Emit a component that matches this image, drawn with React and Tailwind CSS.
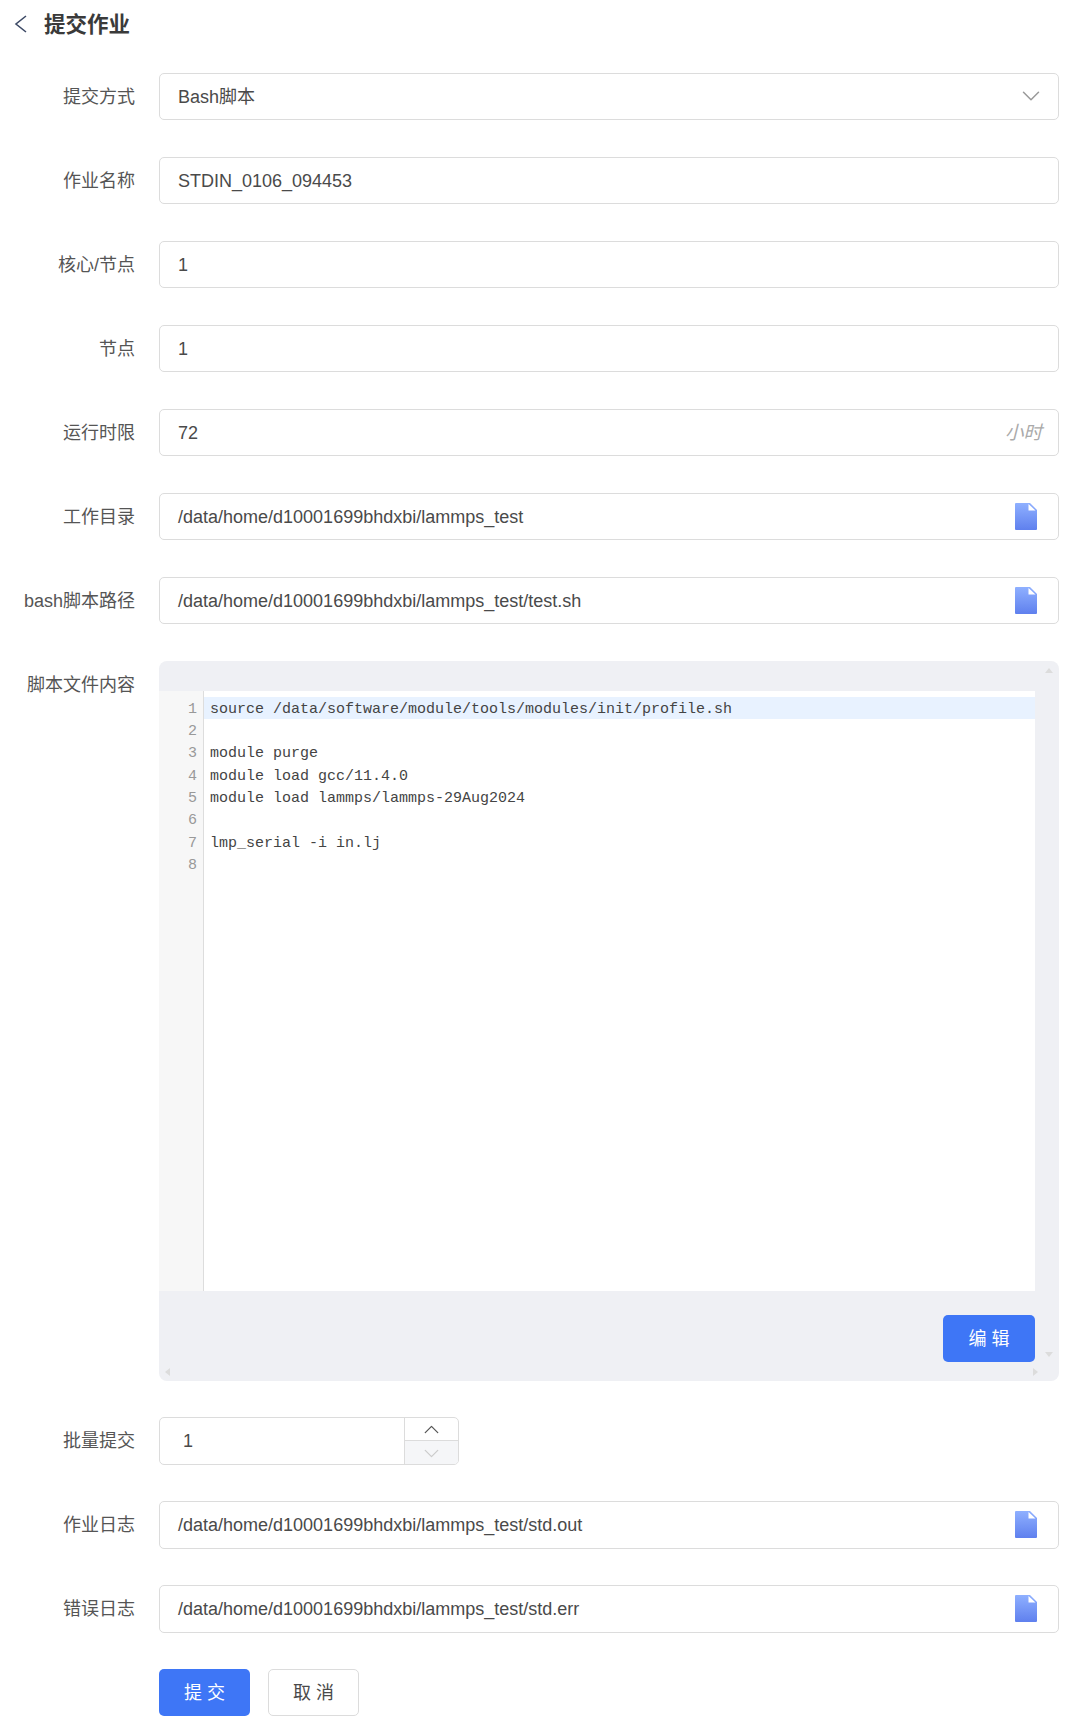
import { ChevronDown, ChevronUp } from 'lucide-react'

const cjk = "font-['Liberation_Sans','Noto_Sans_CJK_SC',sans-serif]"

function FileIcon() {
  return (
    <svg width="22" height="27" viewBox="0 0 22 27" className="shrink-0">
      <defs>
        <linearGradient id="fileGrad" x1="0" y1="0" x2="0" y2="1">
          <stop offset="0%" stopColor="#8fb0ff" />
          <stop offset="100%" stopColor="#5f80ee" />
        </linearGradient>
      </defs>
      <path d="M0 1 Q0 0 1 0 H15 L22 7 V26 Q22 27 21 27 H1 Q0 27 0 26 Z" fill="url(#fileGrad)" />
      <path d="M13.5 1 L20.5 7.5 H13.5 Z" fill="#fff" />
    </svg>
  )
}

function Row({ label, children }) {
  return (
    <div className="flex items-center">
      <div className="w-[135px] pt-[2px] text-right text-[18px] text-[#555] shrink-0">{label}</div>
      <div className="ml-[24px]">{children}</div>
    </div>
  )
}

function Field({ value, right }) {
  return (
    <div className="w-[900px] h-[47.25px] flex items-center justify-between pl-[18px] pr-[21px] border border-[#dcdcdc] rounded-[5px] bg-white text-[18px] text-[#4a4a4a]">
      <span className="pt-[2px]">{value}</span>
      {right}
    </div>
  )
}

const code = [
  'source /data/software/module/tools/modules/init/profile.sh',
  '',
  'module purge',
  'module load gcc/11.4.0',
  'module load lammps/lammps-29Aug2024',
  '',
  'lmp_serial -i in.lj',
  '',
]

export default function App() {
  return (
    <div className={`w-[1087px] h-[1731px] bg-white ${cjk}`}>
      <div className="h-[48px] flex items-center">
        <svg width="13" height="18" viewBox="0 0 13 18" fill="none" className="ml-[14px] text-[#3d4a66]">
          <path d="M12 1 L2 9 L12 17" stroke="currentColor" strokeWidth="1.6" />
        </svg>
        <span className="ml-[17px] pt-[2px] text-[21.5px] font-bold text-[#3a3a3a]">提交作业</span>
      </div>

      <div className="mt-[24.5px] flex flex-col gap-[36.75px]">
        <Row label="提交方式">
          <Field value="Bash脚本" right={<ChevronDown size={30} strokeWidth={1.2} className="text-[#999] -mr-[9px]" />} />
        </Row>
        <Row label="作业名称"><Field value="STDIN_0106_094453" /></Row>
        <Row label="核心/节点"><Field value="1" /></Row>
        <Row label="节点"><Field value="1" /></Row>
        <Row label="运行时限">
          <Field value="72" right={<span className="italic pt-[2px] text-[18.5px] text-[#aaa] -mr-[5px]">小时</span>} />
        </Row>
        <Row label="工作目录"><Field value="/data/home/d10001699bhdxbi/lammps_test" right={<FileIcon />} /></Row>
        <Row label="bash脚本路径"><Field value="/data/home/d10001699bhdxbi/lammps_test/test.sh" right={<FileIcon />} /></Row>

        <div className="flex items-start">
          <div className="w-[135px] mt-[11px] text-right text-[18px] text-[#555] shrink-0">脚本文件内容</div>
          <div className="relative ml-[24px] w-[900px] h-[720px] rounded-[8px] bg-[#eff0f4] pt-[30px]">
            <div className="w-[876px] h-[600px] bg-white flex">
              <div className="w-[45px] h-full bg-[#f7f7f7] border-r border-[#dddddd] pt-[6px] text-right pr-[6px] font-['Liberation_Mono',monospace] text-[15px] text-[#999]">
                {code.map((_, i) => <div key={i} className="h-[22.4px] leading-[26px]">{i + 1}</div>)}
              </div>
              <div className="flex-1 pt-[6px] font-['Liberation_Mono',monospace] text-[15px] text-[#444]">
                {code.map((line, i) => (
                  <div key={i} className={`h-[22.4px] leading-[26px] pl-[6px] whitespace-pre ${i === 0 ? 'bg-[#e8f2ff]' : ''}`}>{line}</div>
                ))}
              </div>
            </div>
            <div className="mt-[24px] pr-[24px] flex justify-end">
              <button className="w-[92px] h-[47px] pt-[2px] rounded-[5px] bg-[#3e76f6] text-white text-[18px]">编 辑</button>
            </div>
            <span className="absolute right-[6px] top-[7px] w-0 h-0 border-x-[4px] border-x-transparent border-b-[5px] border-b-[#dcdcdc]" />
            <span className="absolute right-[6px] bottom-[24px] w-0 h-0 border-x-[4px] border-x-transparent border-t-[5px] border-t-[#dcdcdc]" />
            <span className="absolute left-[6px] bottom-[5px] w-0 h-0 border-y-[4px] border-y-transparent border-r-[5px] border-r-[#dcdcdc]" />
            <span className="absolute right-[21px] bottom-[5px] w-0 h-0 border-y-[4px] border-y-transparent border-l-[5px] border-l-[#dcdcdc]" />
          </div>
        </div>

        <Row label="批量提交">
          <div className="w-[300px] h-[47.25px] flex border border-[#dcdcdc] rounded-[5px] overflow-hidden text-[18px] text-[#4a4a4a]">
            <div className="flex-1 flex items-center pt-[2px] pl-[23px]">1</div>
            <div className="w-[54px] flex flex-col border-l border-[#dcdcdc]">
              <div className="h-[23px] flex items-center justify-center border-b border-[#dcdcdc]">
                <ChevronUp size={25} strokeWidth={1.2} className="text-[#555]" />
              </div>
              <div className="flex-1 flex items-center justify-center bg-[#f5f6f8]">
                <ChevronDown size={25} strokeWidth={1.2} className="text-[#ccc]" />
              </div>
            </div>
          </div>
        </Row>
        <Row label="作业日志"><Field value="/data/home/d10001699bhdxbi/lammps_test/std.out" right={<FileIcon />} /></Row>
        <Row label="错误日志"><Field value="/data/home/d10001699bhdxbi/lammps_test/std.err" right={<FileIcon />} /></Row>

        <div className="flex gap-[18px] ml-[159px]">
          <button className="w-[91px] h-[47px] pt-[2px] rounded-[5px] bg-[#3e76f6] text-white text-[18px]">提 交</button>
          <button className="w-[91px] h-[47px] pt-[2px] rounded-[5px] border border-[#dcdcdc] bg-white text-[#4a4a4a] text-[18px]">取 消</button>
        </div>
      </div>
    </div>
  )
}
